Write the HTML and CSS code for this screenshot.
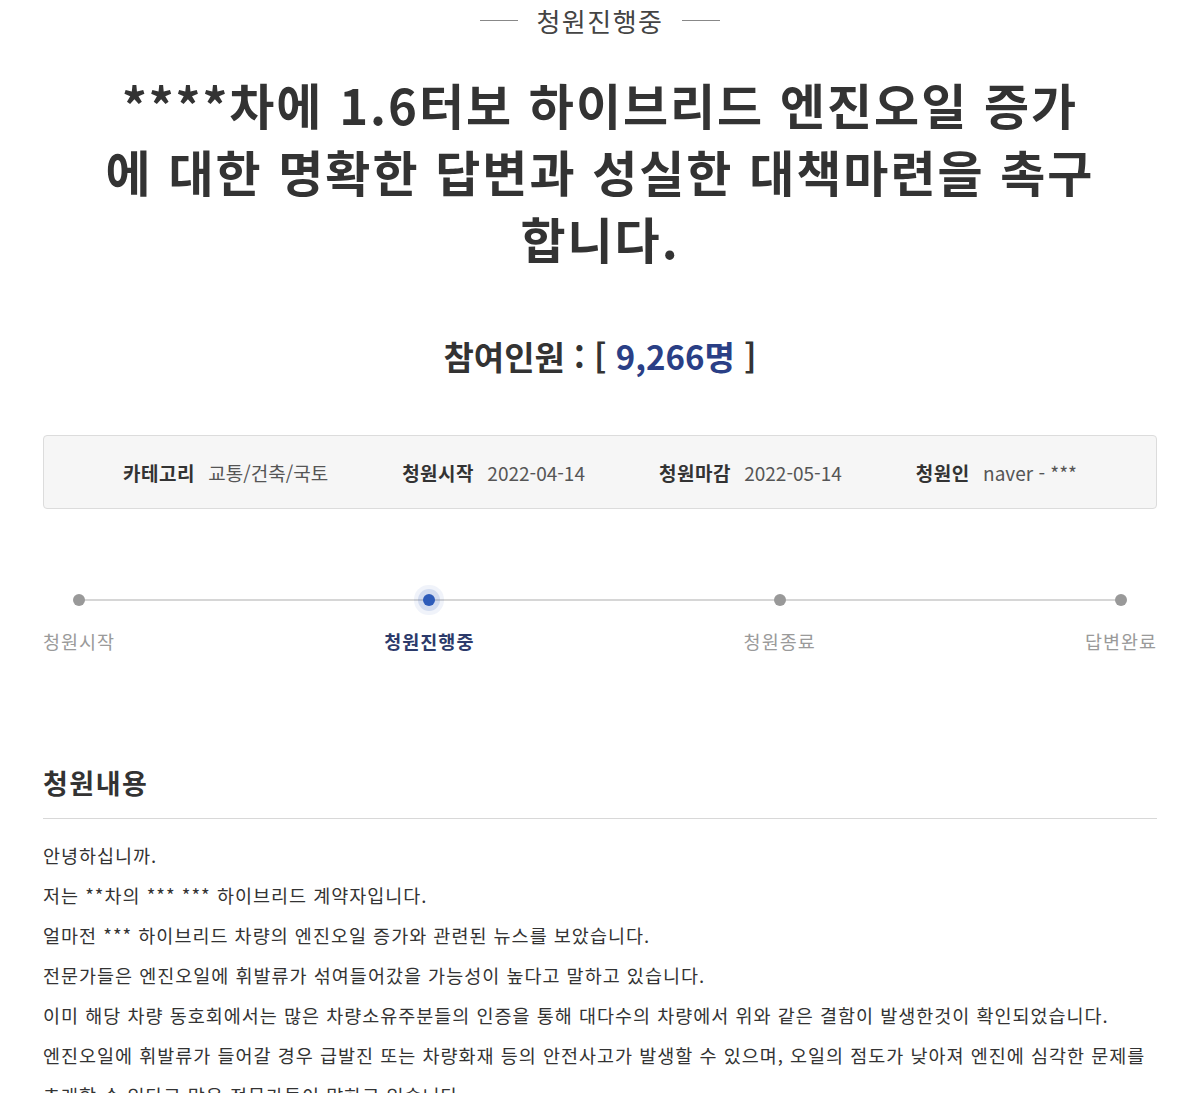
FILE: index.html
```html
<!DOCTYPE html>
<html lang="ko">
<head>
  <meta charset="UTF-8">
  <title>청원진행중</title>
  <meta name="viewport" content="width=device-width, initial-scale=1.0">
  <link rel="stylesheet" href="styles.css">
</head>
<body>
  <div class="wrap">
    <p class="state"><span>청원진행중</span></p>

    <h1 class="title">****차에 1.6터보 하이브리드 엔진오일 증가<br>에 대한 명확한 답변과 성실한 대책마련을 촉구<br>합니다.</h1>

    <p class="count">참여인원 : [ <span class="num">9,266명</span> ]</p>

    <ul class="info">
      <li><strong>카테고리</strong> 교통/건축/국토</li>
      <li><strong>청원시작</strong> 2022-04-14</li>
      <li><strong>청원마감</strong> 2022-05-14</li>
      <li><strong>청원인</strong> naver - ***</li>
    </ul>

    <ol class="steps">
      <li>청원시작</li>
      <li class="on">청원진행중</li>
      <li>청원종료</li>
      <li>답변완료</li>
    </ol>

    <h2 class="sub">청원내용</h2>
    <div class="content">
      <p>안녕하십니까.</p>
      <p>저는 **차의 *** *** 하이브리드 계약자입니다.</p>
      <p>얼마전 *** 하이브리드 차량의 엔진오일 증가와 관련된 뉴스를 보았습니다.</p>
      <p>전문가들은 엔진오일에 휘발류가 섞여들어갔을 가능성이 높다고 말하고 있습니다.</p>
      <p>이미 해당 차량 동호회에서는 많은 차량소유주분들의 인증을 통해 대다수의 차량에서 위와 같은 결함이 발생한것이 확인되었습니다.</p>
      <p>엔진오일에 휘발류가 들어갈 경우 급발진 또는 차량화재 등의 안전사고가 발생할 수 있으며, 오일의 점도가 낮아져 엔진에 심각한 문제를 초래할 수 있다고 많은 전문가들이 말하고 있습니다.</p>
    </div>
  </div>
</body>
</html>
```

FILE: styles.css
```css
:root {
  --text: #333;
  --muted: #9a9a9a;
  --line: #d6d6d6;
  --navy: #2a3f86;
  --blue: #2d5bb9;
}

body {
  margin: 0;
  background: #fff;
  color: var(--text);
  font-family: "Noto Sans CJK KR", "Noto Sans", sans-serif;
}

.wrap {
  width: 1114px;
  margin: 0 auto;
}

.state {
  margin: 0;
  display: flex;
  justify-content: center;
  align-items: center;
  gap: 18px;
  height: 40px;
  font-size: 26px;
  letter-spacing: 1.5px;
  color: #444;
}

.state::before,
.state::after {
  content: "";
  width: 38px;
  height: 1px;
  background: #888;
}

.title {
  margin: 30px 0 0;
  text-align: center;
  font-size: 49px;
  line-height: 67px;
  letter-spacing: 2px;
  font-weight: 700;
  color: #333;
}

.count {
  margin: 60px 0 0;
  text-align: center;
  font-size: 33px;
  line-height: 50px;
  font-weight: 700;
}

.count .num {
  color: var(--navy);
}

.info {
  list-style: none;
  margin: 54px 0 0;
  padding: 0;
  height: 72px;
  display: flex;
  justify-content: center;
  align-items: center;
  gap: 74px;
  background: #f6f6f6;
  border: 1px solid #dcdcdc;
  border-radius: 4px;
  font-size: 19px;
  color: #555;
}

.info strong {
  color: #333;
  margin-right: 8px;
  letter-spacing: 0.5px;
}

.steps {
  position: relative;
  list-style: none;
  margin: 85px 0 0;
  padding: 0;
  display: flex;
  justify-content: space-between;
}

.steps::before {
  content: "";
  position: absolute;
  top: 5px;
  left: 37px;
  right: 37px;
  height: 2px;
  background: var(--line);
}

.steps li {
  position: relative;
  display: flex;
  flex-direction: column;
  align-items: center;
  gap: 21px;
  font-size: 18.5px;
  line-height: 28px;
  letter-spacing: 1px;
  color: var(--muted);
}

.steps li::before {
  content: "";
  width: 12px;
  height: 12px;
  border-radius: 50%;
  background: #999;
}

.steps li.on {
  color: #2c3a6a;
  font-weight: 700;
}

.steps li.on::before {
  background: var(--blue);
  box-shadow: 0 0 0 5px rgba(45, 91, 185, 0.15), 0 0 0 9px rgba(45, 91, 185, 0.07);
}

.sub {
  margin: 110px 0 0;
  padding-bottom: 17px;
  border-bottom: 1px solid #d8d8d8;
  font-size: 27px;
  line-height: 36px;
  letter-spacing: 1.5px;
  font-weight: 700;
}

.content {
  margin-top: 16px;
  font-size: 18.5px;
  line-height: 40px;
  letter-spacing: 1px;
  color: #333;
}

.content p {
  margin: 0;
}
```
